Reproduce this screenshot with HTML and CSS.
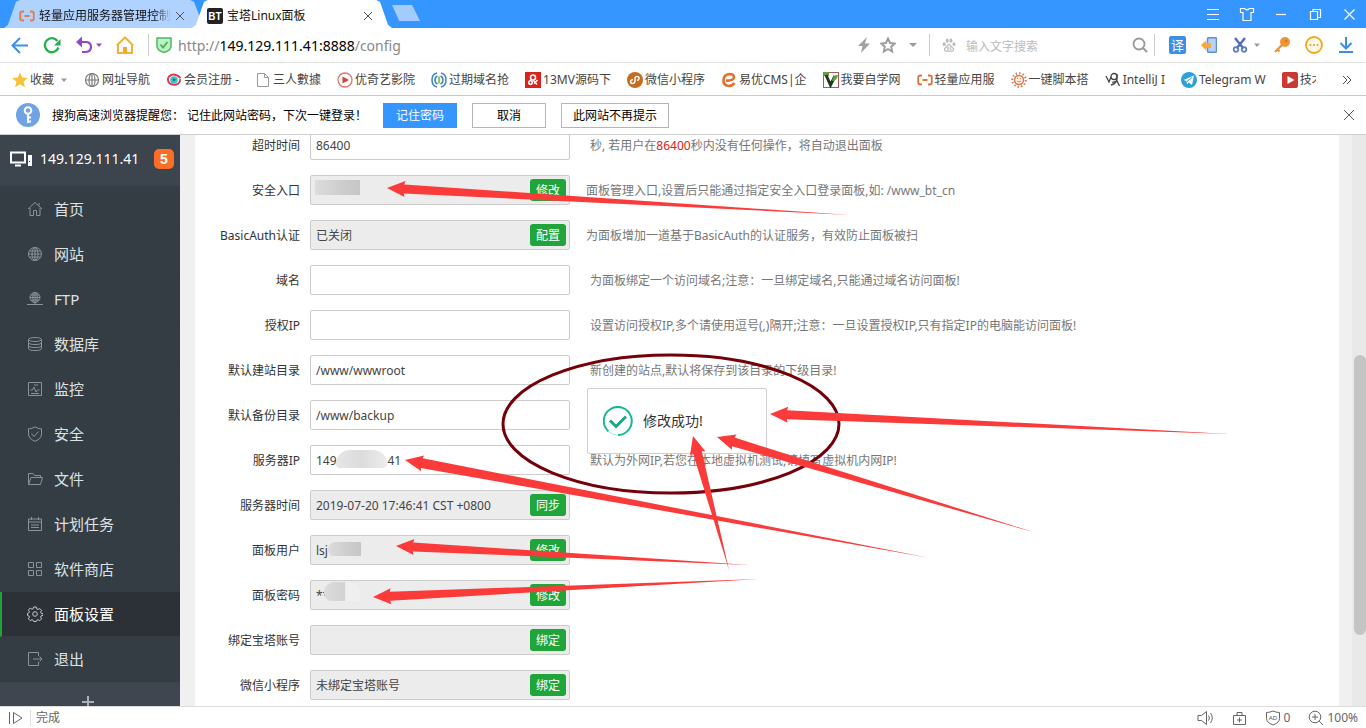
FILE: index.html
```html
<!DOCTYPE html>
<html lang="zh-CN">
<head>
<meta charset="utf-8">
<title>宝塔Linux面板</title>
<link rel="stylesheet" href="styles.css">
</head>
<body>
<header class="titlebar">
  <div class="tab tab-idle">
    <svg class="ic" viewBox="0 0 16 16"><path d="M5 3.500H3.500Q1.200 3.500 1.200 5.500v5q0 2 2.300 2H5M11 3.500h1.500q2.300 0 2.300 2v5q0 2-2.300 2H11M5.500 8h5" fill="none" stroke="#e57a45" stroke-width="1.800"/></svg>
    <span class="tab-title fade">轻量应用服务器管理控制</span>
    <button class="bare" aria-label="关闭标签"><svg class="x" viewBox="0 0 10 10"><path d="M1 1l8 8M9 1L1 9"/></svg></button>
  </div>
  <div class="tab tab-active">
    <svg class="ic" viewBox="0 0 16 16"><rect width="16" height="16" rx="2" fill="#222"/><text x="8" y="12" text-anchor="middle" class="bt">BT</text></svg>
    <span class="tab-title">宝塔Linux面板</span>
    <button class="bare" aria-label="关闭标签"><svg class="x" viewBox="0 0 10 10"><path d="M1 1l8 8M9 1L1 9"/></svg></button>
  </div>
  <button class="newtab" aria-label="新标签"></button>
  <div class="win">
    <button class="bare" aria-label="菜单"><svg class="ic" viewBox="0 0 16 16"><path d="M2 3.500h12M2 8.500h12M2 13.500h12"/></svg></button>
    <button class="bare" aria-label="皮肤"><svg class="ic" viewBox="0 0 16 16"><path d="M1.500 2.500h4Q8 5 10.500 2.500h4v4H12v8H4v-8H1.500z"/></svg></button>
    <button class="bare" aria-label="最小化"><svg class="ic" viewBox="0 0 16 16"><path d="M3 8.500h10"/></svg></button>
    <button class="bare" aria-label="还原"><svg class="ic" viewBox="0 0 16 16"><path d="M3.500 5.500h7v8h-7zM6 5V3.500h7.500v8H11"/></svg></button>
    <button class="bare" aria-label="关闭"><svg class="ic" viewBox="0 0 16 16"><path d="M3.500 3.500l10 10M13.500 3.500l-10 10"/></svg></button>
  </div>
</header>

<nav class="toolbar">
  <div class="nav-left">
    <button class="bare" aria-label="后退"><svg class="ic18" viewBox="0 0 18 18"><path d="M17 9.500H2M9 2L1.500 9.500 9 17" fill="none" stroke="#3e8ff0" stroke-width="2"/></svg></button>
    <button class="bare" aria-label="刷新"><svg class="ic18" viewBox="0 0 18 18"><path d="M15.500 11.500A7 7 0 1 1 14.500 5" fill="none" stroke="#23b14d" stroke-width="2.300"/><path d="M17.500 3v6.500H11z" fill="#23b14d"/></svg></button>
    <button class="bare undo" aria-label="撤销"><svg class="ic18" viewBox="0 0 18 18"><path d="M3 6h8.500q4.500.5 4.500 5t-5 5H7" fill="none" stroke="#9146cc" stroke-width="2.200"/><path d="M1 6l6-5.500v11z" fill="#9146cc"/></svg><svg class="caret" viewBox="0 0 8 8"><path d="M1 2.500h6L4 6z" fill="#9146cc"/></svg></button>
    <button class="bare" aria-label="主页"><svg class="ic18" viewBox="0 0 18 18"><path d="M2 8.500v8.500h14V8.500M.8 9.500L9 1.500l8.200 8" fill="none" stroke="#f3b13c" stroke-width="2"/><rect x="7" y="11" width="4" height="6" fill="#f3a52c"/></svg></button>
    <i class="divider"></i>
    <svg class="ic" viewBox="0 0 16 16"><path d="M1 1h14v8q0 4.500-7 6.500Q1 13.500 1 9z" fill="#bdf0c6" stroke="#4cb963" stroke-width="1.500"/><path d="M4.500 7.500L7 10.500 11.500 5" fill="none" stroke="#43b25b" stroke-width="1.800"/></svg>
    <span class="url">http://<b>149.129.111.41:8888</b>/config</span>
  </div>
  <div class="nav-right">
    <svg class="ic" viewBox="0 0 16 16"><path d="M11 0L2 9h4.500L5 16l9-9.500H9z" fill="#a2a2a2"/></svg>
    <svg class="ic star" viewBox="0 0 16 16"><path d="M8 1.500l2 4.500 4.800.5-3.600 3.200 1 4.800L8 12l-4.200 2.500 1-4.800L1.200 6.500 6 6z" fill="none" stroke="#9c9c9c" stroke-width="1.900"/></svg>
    <svg class="caret wide" viewBox="0 0 8 8"><path d="M0 2h8L4 6z" fill="#999"/></svg>
    <i class="divider"></i>
    <svg class="ic paw" viewBox="0 0 16 16"><g fill="#bbb"><ellipse cx="2.500" cy="7" rx="1.700" ry="2.200"/><ellipse cx="6" cy="3" rx="1.700" ry="2.300"/><ellipse cx="10.200" cy="3" rx="1.700" ry="2.300"/><ellipse cx="13.700" cy="7" rx="1.700" ry="2.200"/></g><path d="M8 7l5 5q1 3-2 3H5q-3 0-2-3z" fill="none" stroke="#bbb" stroke-width="1.400"/><path d="M6 10v3h1.500v-3M9.500 9.500V13H11" fill="none" stroke="#bbb"/></svg>
    <input class="search" type="text" placeholder="输入文字搜索" aria-label="搜索">
    <svg class="ic" viewBox="0 0 16 16"><circle cx="7" cy="7" r="5.500" fill="none" stroke="#999" stroke-width="1.800"/><path d="M11 11l4 4" stroke="#999" stroke-width="2"/></svg>
    <i class="divider"></i>
    <div class="tools">
      <span class="trans">译</span>
      <svg class="ic" viewBox="0 0 16 16"><rect x="6.500" y=".8" width="9" height="14.400" rx="1" fill="#b8d2f5" stroke="#5b8fd8" stroke-width="1.500"/><path d="M0 8l5-4.500V6h5v5H5v2.500z" fill="#f5a93a"/></svg>
      <span class="pair"><svg class="ic" viewBox="0 0 16 16"><path d="M3 1l8.500 10.500M13 1L4.500 11.500" stroke="#5569bd" stroke-width="2.400"/><circle cx="4" cy="12.500" r="2.300" fill="none" stroke="#5b7cc9" stroke-width="1.700"/><circle cx="12" cy="12.500" r="2.300" fill="none" stroke="#5b7cc9" stroke-width="1.700"/></svg><svg class="caret" viewBox="0 0 8 8"><path d="M1 2.500h6L4 6z" fill="#999"/></svg></span>
      <svg class="ic" viewBox="0 0 16 16"><circle cx="11" cy="5" r="5" fill="#ef9634"/><path d="M9 7l-8 8M3 12l2.500 2.500" stroke="#ef9634" stroke-width="2.400"/><circle cx="12" cy="4" r="1.500" fill="#d27d1e"/></svg>
      <svg class="ic18" viewBox="0 0 18 18"><circle cx="9" cy="9" r="8" fill="#fff8e6" stroke="#f0a91f" stroke-width="1.800"/><g fill="#d99d30"><circle cx="5.500" cy="9" r="1"/><circle cx="9" cy="9" r="1"/><circle cx="12.500" cy="9" r="1"/></g></svg>
      <svg class="ic" viewBox="0 0 16 16"><path d="M8 0v11M2.500 6L8 11.500 13.500 6M1 15h14" fill="none" stroke="#3b8de8" stroke-width="2"/></svg>
    </div>
  </div>
</nav>

<nav class="bookmarks">
  <a href="#" class="fav"><svg class="ic" viewBox="0 0 16 16"><path d="M8 .5l2.300 5 5.500.5-4.200 3.700 1.300 5.500L8 12.300l-4.900 2.900 1.300-5.500L.2 6l5.500-.5z" fill="#f8c13c"/></svg>收藏<svg class="caret" viewBox="0 0 8 8"><path d="M1 2.500h6L4 6z" fill="#999"/></svg></a>
  <a href="#"><svg class="ic" viewBox="0 0 16 16"><g fill="none" stroke="#777" stroke-width="1.200"><circle cx="8" cy="8" r="6.500"/><ellipse cx="8" cy="8" rx="3" ry="6.500"/><path d="M1.500 8h13M8 1.500v13"/></g></svg>网址导航</a>
  <a href="#"><svg class="ic" viewBox="0 0 16 16"><circle cx="8" cy="8" r="3.800" fill="#38c5c3"/><circle cx="8" cy="7.800" r="1.300" fill="#1d6f80"/><path d="M14.500 6Q8 0 3 4.500.5 8 3.500 11" fill="none" stroke="#e8344c" stroke-width="1.900"/><path d="M3 11q5 3.500 9.500.5 2-2 1.500-4.500" fill="none" stroke="#d4304f" stroke-width="1.700"/></svg>会员注册 -</a>
  <a href="#"><svg class="ic" viewBox="0 0 16 16"><path d="M2.500 1.500h7l4 4v9h-11zM9.500 1.500v4h4" fill="#fff" stroke="#999"/></svg>三人數據</a>
  <a href="#"><svg class="ic" viewBox="0 0 16 16"><circle cx="8" cy="8" r="7" fill="#fff" stroke="#d9776b" stroke-width="1.300"/><path d="M5.500 4.500L12 8l-6.500 3.500z" fill="#d54235"/></svg>优奇艺影院</a>
  <a href="#"><svg class="ic" viewBox="0 0 16 16"><g fill="none" stroke="#3c84c6" stroke-width="1.500"><path d="M6 1Q1 2 1 8t5 7M10 1q5 1 5 7t-5 7M6.500 4Q4 5 4 8t2.500 4M9.500 4Q12 5 12 8t-2.500 4"/></g><path d="M8 4.500v7" stroke="#96c94d" stroke-width="2"/></svg>过期域名抢</a>
  <a href="#"><svg class="ic" viewBox="0 0 16 16"><rect width="16" height="16" fill="#d8231f"/><g fill="none" stroke="#fff" stroke-width="1.500"><circle cx="8" cy="5.500" r="2.500"/><circle cx="5.500" cy="10.500" r="1.800"/><path d="M8 8l4 4.500M9 11.500l3.500-3.500"/></g></svg>13MV源码下</a>
  <a href="#"><svg class="ic" viewBox="0 0 16 16"><circle cx="8" cy="8" r="8" fill="#c56c21"/><path d="M6 7.500q-2.500.5-2.500 2.300 0 1.700 2 1.700T8 9.500v-3q0-2 2-2t2.200 1.700Q12.200 8 10 8.500" fill="none" stroke="#fff" stroke-width="1.400"/></svg>微信小程序</a>
  <a href="#"><svg class="ic" viewBox="0 0 16 16"><path d="M5 8.500q7 .5 8-3Q13 2 8.500 2 3 2.500 2.500 8t5 6q4 0 6-3" fill="none" stroke="#e5702c" stroke-width="2.700"/></svg>易优CMS|企</a>
  <a href="#"><svg class="ic" viewBox="0 0 16 16"><rect x=".5" y=".5" width="15" height="15" fill="#fff" stroke="#b05656"/><path d="M0 0h6v4H0z" fill="#57a541"/><path d="M3 3l4.500 10L12 4" fill="none" stroke="#26361d" stroke-width="3"/><path d="M9 9q1-7 6-6-1 6-6 6" fill="#57a541"/></svg>我要自学网</a>
  <a href="#"><svg class="ic" viewBox="0 0 16 16"><path d="M5 3.500H3.500Q1.200 3.500 1.200 5.500v5q0 2 2.300 2H5M11 3.500h1.500q2.300 0 2.300 2v5q0 2-2.300 2H11M5.500 8h5" fill="none" stroke="#e2703a" stroke-width="1.800"/></svg>轻量应用服</a>
  <a href="#"><svg class="ic" viewBox="0 0 16 16"><circle cx="8" cy="8" r="4.500" fill="#fff7ef" stroke="#d9774b" stroke-width="1.500"/><circle cx="8" cy="8" r="6.800" fill="none" stroke="#d9774b" stroke-width="2" stroke-dasharray="1.500 2.050"/><path d="M6 9q2 2 4 0M6 6.500h1M9 6.500h1" fill="none" stroke="#d9774b"/></svg>一键脚本搭</a>
  <a href="#"><svg class="ic" viewBox="0 0 16 16"><g fill="none" stroke="#444" stroke-width="1.300"><path d="M1 4l3 6 2-5"/><circle cx="9" cy="4.500" r="3"/><path d="M12 2v5q-1 5-6 6M7 10.500l5-1.500 2.500 5"/></g></svg>IntelliJ I</a>
  <a href="#"><svg class="ic" viewBox="0 0 16 16"><circle cx="8" cy="8" r="8" fill="#2ca1d6"/><path d="M2.500 8L13 3.500 11 13 7.500 10.500 6 12.500 5.500 9z" fill="#fff"/><path d="M6 9.500l5-4" stroke="#2ca1d6"/></svg>Telegram W</a>
  <a href="#" class="cut"><svg class="ic" viewBox="0 0 16 16"><rect width="16" height="16" rx="2" fill="#c93a33"/><path d="M5.500 4l7 4-7 4z" fill="#fff"/></svg>技术</a>
  <button class="bare more" aria-label="更多书签"><svg class="x" viewBox="0 0 10 10"><path d="M1 1l4 4-4 4M5 1l4 4-4 4"/></svg></button>
</nav>

<section class="infobar">
  <svg class="key" viewBox="0 0 24 24"><circle cx="12" cy="12" r="12" fill="#6fa3e3"/><circle cx="12" cy="7.500" r="3.300" fill="none" stroke="#fff" stroke-width="2"/><path d="M12 11v9M12 14.500h3M12 18.500h3" stroke="#fff" stroke-width="2"/></svg>
  <p>搜狗高速浏览器提醒您： 记住此网站密码，下次一键登录！</p>
  <button class="ib primary">记住密码</button>
  <button class="ib">取消</button>
  <button class="ib long">此网站不再提示</button>
  <button class="bare close" aria-label="关闭提示"><svg class="x" viewBox="0 0 10 10"><path d="M0 0l10 10M10 0L0 10"/></svg></button>
</section>

<main class="view">
  <aside class="side">
    <div class="host">
      <svg class="pc" viewBox="0 0 22 16"><path d="M1 1.500h14v10H1z" fill="none" stroke="#fff" stroke-width="2"/><path d="M5 14.500h6" stroke="#fff" stroke-width="2"/><rect x="18" y="4" width="4" height="11" fill="#fff"/><path d="M19 10.500h1" stroke="#3c444d"/></svg>
      <span>149.129.111.41</span><em>5</em>
    </div>
    <nav class="menu">
      <a href="#"><svg class="ic" viewBox="0 0 16 16"><path d="M1 8l7-6.500L15 8M3 7v7.500h3.500v-5h3v5H13V7M12 2v2.500"/></svg>首页</a>
      <a href="#"><svg class="ic" viewBox="0 0 16 16"><circle cx="8" cy="8" r="6.500"/><ellipse cx="8" cy="8" rx="3" ry="6.500"/><path d="M1.500 8h13M8 1.500v13M2.500 5h11M2.500 11h11"/></svg>网站</a>
      <a href="#"><svg class="ic" viewBox="0 0 16 16"><circle cx="8" cy="6.500" r="5"/><ellipse cx="8" cy="6.500" rx="2.200" ry="5"/><path d="M3 6.500h10M8 1.500V13M4 4h8M4 9h8M0 13.500h16"/></svg>FTP</a>
      <a href="#"><svg class="ic" viewBox="0 0 16 16"><ellipse cx="8" cy="3.500" rx="6.500" ry="2"/><path d="M1.500 3.500v9q0 2 6.500 2t6.500-2v-9M1.500 6.500q0 2 6.500 2t6.500-2M1.500 9.500q0 2 6.500 2t6.500-2"/></svg>数据库</a>
      <a href="#"><svg class="ic" viewBox="0 0 16 16"><path d="M1.500 1.500h13v13h-13zM3.500 9h2l1.500-3 2 5 1.500-2h2M4 12.500h8M7 4h4"/></svg>监控</a>
      <a href="#"><svg class="ic" viewBox="0 0 16 16"><path d="M8 .8q3 2 6.500 2v5q0 5-6.500 7.500Q1.500 12.800 1.500 7.800v-5q3.500 0 6.500-2M4.500 7.500l2.500 3 4.500-5"/></svg>安全</a>
      <a href="#"><svg class="ic" viewBox="0 0 16 16"><path d="M1.500 13.500v-11H6l1.500 2h6v2M1.500 13.500l2.500-7h11.500l-2 7z"/></svg>文件</a>
      <a href="#"><svg class="ic" viewBox="0 0 16 16"><path d="M1.500 3h13v11.500h-13zM1.500 6h13M4.500 1v3M11.500 1v3M4 9h8M4 11.500h8"/></svg>计划任务</a>
      <a href="#"><svg class="ic" viewBox="0 0 16 16"><path d="M1.500 1.500h5v5h-5zM9.500 1.500h5v5h-5zM1.500 9.500h5v5h-5zM9.500 9.500h5v5h-5z"/></svg>软件商店</a>
      <a href="#" class="on"><svg class="ic" viewBox="0 0 16 16"><circle cx="8" cy="8" r="2.300"/><path d="M6.700 1h2.600l.5 2 1.200.5 1.800-1 1.800 1.800-1 1.800.5 1.200 2 .5v1.600l-2 .5-.5 1.200 1 1.800-1.800 1.800-1.800-1-1.200.5-.5 1.300H6.700l-.5-1.300-1.200-.5-1.800 1-1.800-1.800 1-1.800-.5-1.200-1.400-.5V7.300l1.400-.5.500-1.200-1-1.800 1.800-1.600 1.800 1 1.200-.5z"/></svg>面板设置</a>
      <a href="#"><svg class="ic" viewBox="0 0 16 16"><path d="M11.500 5V1.500h-10v13h10V11M6 8h9M12.500 5.500L15 8l-2.500 2.500"/></svg>退出</a>
    </nav>
    <button class="bare plus" aria-label="添加"><svg class="ic" viewBox="0 0 16 16"><path d="M8 2v12M2 8h12"/></svg></button>
  </aside>
  <section class="panel">
    <form class="form">
      <div class="row"><label for="f1">超时时间</label><div class="box"><input id="f1" value="86400"></div><p>秒, 若用户在<strong>86400</strong>秒内没有任何操作，将自动退出面板</p></div>
      <div class="row near"><label for="f2">安全入口</label><div class="box off"><input id="f2" readonly><i class="mask m2"></i><button type="button">修改</button></div><p>面板管理入口,设置后只能通过指定安全入口登录面板,如: /www_bt_cn</p></div>
      <div class="row near"><label for="f3">BasicAuth认证</label><div class="box off"><input id="f3" value="已关闭" readonly><button type="button">配置</button></div><p>为面板增加一道基于BasicAuth的认证服务，有效防止面板被扫</p></div>
      <div class="row"><label for="f4">域名</label><div class="box"><input id="f4"></div><p>为面板绑定一个访问域名;注意：一旦绑定域名,只能通过域名访问面板!</p></div>
      <div class="row"><label for="f5">授权IP</label><div class="box"><input id="f5"></div><p>设置访问授权IP,多个请使用逗号(,)隔开;注意：一旦设置授权IP,只有指定IP的电脑能访问面板!</p></div>
      <div class="row"><label for="f6">默认建站目录</label><div class="box"><input id="f6" value="/www/wwwroot"></div><p>新创建的站点,默认将保存到该目录的下级目录!</p></div>
      <div class="row"><label for="f7">默认备份目录</label><div class="box"><input id="f7" value="/www/backup"></div></div>
      <div class="row"><label for="f8">服务器IP</label><div class="box"><input id="f8" value="149.129.111.41"><i class="mask m8"></i></div><p>默认为外网IP,若您在本地虚拟机测试,请填写虚拟机内网IP!</p></div>
      <div class="row"><label for="f9">服务器时间</label><div class="box off"><input id="f9" value="2019-07-20 17:46:41 CST +0800" readonly><button type="button">同步</button></div></div>
      <div class="row"><label for="f10">面板用户</label><div class="box off"><input id="f10" value="lsj" readonly><i class="mask m10"></i><button type="button">修改</button></div></div>
      <div class="row"><label for="f11">面板密码</label><div class="box off"><input id="f11" value="**" readonly><i class="mask m11"></i><button type="button">修改</button></div></div>
      <div class="row"><label for="f12">绑定宝塔账号</label><div class="box off"><input id="f12" readonly><button type="button">绑定</button></div></div>
      <div class="row"><label for="f13">微信小程序</label><div class="box off"><input id="f13" value="未绑定宝塔账号" readonly><button type="button">绑定</button></div></div>
    </form>
  </section>
  <div class="scroll"><i></i></div>
  <div class="toast" role="status"><svg viewBox="0 0 30 30"><path d="M5.500 25.500A14 14 0 1 1 15 29" fill="none" stroke="#14b795" stroke-width="2"/><path d="M5.500 25.500Q9 29 15 29" fill="none" stroke="#a9e5d9" stroke-width="1"/><path d="M7 14.500l6 6L23 10.500" fill="none" stroke="#14a88a" stroke-width="3"/></svg>修改成功!</div>
</main>

<footer class="status">
  <svg class="ic" viewBox="0 0 16 16"><path d="M1.500 2v12M5.500 2.500v11L14 8z"/></svg>
  <span class="done">完成</span>
  <div class="status-right">
    <svg class="ic" viewBox="0 0 16 16"><path d="M1 5.500h3.500l5-4v13l-5-4H1zM11.500 5.500q2 2.500 0 5M13.500 3q3.500 5 0 10"/></svg>
    <svg class="ic" viewBox="0 0 16 16"><path d="M2.500 5.500h12v9h-12zM6 5V2.500h5V5M8.500 7.500v5M6 10h5"/></svg>
    <span class="pair"><svg class="ic" viewBox="0 0 16 16"><path d="M8 1q3 1.500 6.500 1.500v6q0 4-6.500 6.500-6.500-2.500-6.500-6.500v-6Q5 2.500 8 1"/><text x="8" y="10" text-anchor="middle" class="ad">AD</text></svg>0</span>
    <span class="pair"><svg class="ic" viewBox="0 0 16 16"><circle cx="7" cy="7" r="5.800"/><path d="M11.200 11.200L15 15M4 7h6M7 4v6"/></svg>100%</span>
  </div>
</footer>

<svg class="marks" width="1366" height="728" viewBox="0 0 1366 728" aria-hidden="true">
  <ellipse cx="671" cy="424" rx="168" ry="69" fill="none" stroke="#74000a" stroke-width="3"/>
  <g fill="#fb3a3a">
    <path transform="translate(387 188) rotate(3.340)" d="M0 0L18-8 17-4.500 464 0 17 4.500 18 8z"/>
    <path transform="translate(770 414) rotate(2.490)" d="M0 0L18-8 17-4.500 460 0 17 4.500 18 8z"/>
    <path transform="translate(717 437) rotate(16.730)" d="M0 0L18-8 17-4.500 330 0 17 4.500 18 8z"/>
    <path transform="translate(693 436) rotate(74.960)" d="M0 0L18-8 17-4.500 139 0 17 4.500 18 8z"/>
    <path transform="translate(405 460) rotate(10.570)" d="M0 0L18-8 17-5 534 0 17 5 18 8z"/>
    <path transform="translate(396 546) rotate(3.070)" d="M0 0L18-8 17-4.500 354 0 17 4.500 18 8z"/>
    <path transform="translate(373 597) rotate(-2.660)" d="M0 0L18-8 17-4.500 387 0 17 4.500 18 8z"/>
  </g>
</svg>
</body>
</html>
```
FILE: styles.css
```css
* { box-sizing: border-box; }
body {
  margin: 0;
  height: 100vh;
  display: flex;
  flex-direction: column;
  position: relative;
  overflow: hidden;
  font: 12px/16px "Noto Sans", "Noto Sans CJK SC", sans-serif;
  color: #333;
  background: #fff;
}
button, input { font: inherit; color: inherit; }
p { margin: 0; }
a { color: inherit; text-decoration: none; }
svg { display: block; flex: none; }
.ic { width: 16px; height: 16px; }
.ic18 { width: 18px; height: 18px; }
.caret { width: 8px; height: 8px; }
.bare { border: 0; padding: 0; background: none; display: flex; align-items: center; }
.x { width: 10px; height: 10px; fill: none; stroke: #555; stroke-width: 1; overflow: visible; }
.pair { display: flex; align-items: center; }

/* title bar */
.titlebar { height: 28px; flex: none; display: flex; align-items: flex-start; background: #3596ff; padding-left: 4px; }
.tab { height: 28px; width: 200px; display: flex; align-items: center; padding: 3px 19px 0 15px; gap: 4px; color: #111; }
.tab-idle { background: #b0d2ff; clip-path: polygon(0 100%, 2% 88%, 6% 6%, 8% 0, 93% 0, 95% 6%, 100% 100%); }
.tab-active { background: #fff; margin-left: -12px; clip-path: polygon(0 100%, 2% 88%, 6% 6%, 8% 0, 92% 0, 94% 6%, 98% 88%, 100% 100%); }
.tab-title { flex: 1; white-space: nowrap; overflow: hidden; }
.fade { mask-image: linear-gradient(90deg, #000 88%, transparent); }
.bt { font: bold 10px "Liberation Sans", sans-serif; fill: #fff; }
.newtab { width: 28px; height: 16px; border: 0; padding: 0; margin-top: 5px; background: #a4cbfd; clip-path: polygon(0 0, 72% 0, 100% 100%, 26% 100%); }
.win { margin-left: auto; display: flex; gap: 18px; padding: 6px 9px 0 0; }
.win .ic { fill: none; stroke: #fff; stroke-width: 1.200; }

/* address bar */
.toolbar { height: 35px; flex: none; display: flex; align-items: center; justify-content: space-between; border-bottom: 1px solid #e2e2e2; }
.nav-left { display: flex; align-items: center; padding-left: 11px; gap: 14px; }
.nav-left .undo { gap: 2px; }
.nav-left .undo + .bare { margin-left: -1px; }
.divider { width: 1px; height: 22px; background: #ccc; }
.nav-left .divider + .ic { margin: 0 -8px 0 -7px; }
.url { font-size: 14px; line-height: 20px; padding-top: 2px; color: #888; }
.url b { font-weight: 400; color: #000; }
.nav-right { display: flex; align-items: center; padding-right: 12px; }
.star { margin: 0 13px 0 8px; }
.nav-right .divider { margin: 0 12px; }
.nav-right .ic + .divider { margin: 0 14px 0 6px; }
.paw { width: 14px; height: 14px; }
.search { width: 166px; height: 20px; border: 0; padding: 2px 0 0; margin: 0 0 0 10px; outline: 0; background: none; }
.search::placeholder { color: #bbb; opacity: 1; }
.tools { display: flex; align-items: center; gap: 15px; }
.tools .pair { gap: 5px; margin-right: -2px; }
.trans { width: 17px; height: 18px; border-radius: 2px; background: #3c8fe9; color: #fff; font-size: 13px; line-height: 18px; text-align: center; }

/* bookmarks */
.bookmarks { height: 33px; flex: none; display: flex; align-items: center; gap: 16px; padding: 2px 0 0 12px; border-bottom: 1px solid #c9c9c9; overflow: hidden; }
.bookmarks a { display: flex; align-items: center; gap: 2px; white-space: nowrap; color: #444; }
.bookmarks .fav .caret { margin-left: 4px; }
.bookmarks .cut { width: 34px; overflow: hidden; }
.more { margin: 0 14px 0 auto; }

/* password prompt */
.infobar { height: 39px; flex: none; display: flex; align-items: center; padding: 0 12px 0 16px; color: #000; border-bottom: 1px solid #d0d0d0; }
.key { width: 24px; height: 24px; margin-right: 12px; }
.infobar p { margin-right: 16px; padding-top: 2px; }
.ib { width: 74px; height: 25px; padding: 1px 0 0; margin-right: 15px; background: #fff; border: 1px solid #b5b5b5; }
.ib.primary { background: #3596ff; border-color: #3596ff; color: #fff; }
.ib.long { width: 108px; }
.close { margin-left: auto; }

/* page */
.view { flex: 1; min-height: 0; display: flex; position: relative; overflow: hidden; background: #f0f0f1; }
.side { width: 180px; flex: none; display: flex; flex-direction: column; background: #3f464f; }
.host { flex: none; height: 51px; display: flex; align-items: center; padding: 0 6px 4px 10px; color: #fff; font-size: 14px; background: #3c444d; }
.pc { width: 22px; height: 16px; margin-right: 8px; }
.host em { margin-left: auto; width: 20px; height: 20px; border-radius: 5px; background: #fc6d26; font: bold 14px/20px "Liberation Sans", sans-serif; text-align: center; }
.menu { flex: none; background: #353d44; padding-top: 1px; }
.menu a { height: 45px; display: flex; align-items: center; gap: 11px; padding-left: 27px; font-size: 15px; color: #dfe2e5; border-bottom: 1px solid #333a41; }
.menu .ic, .plus .ic { fill: none; stroke: #8b9299; stroke-width: 1; }
.menu .on { background: #2c3138; color: #fff; border-left: 2px solid #20a53a; padding-left: 25px; }
.menu .on .ic { stroke: #c5c8cb; }
.plus { justify-content: center; flex: none; margin: 12px 4px 0 0; }
.plus .ic { stroke: #aab0b5; stroke-width: 2; }
.panel { flex: 1; min-width: 0; margin: 0 13px 0 15px; background: #fff; overflow: hidden; }
.form { display: grid; gap: 15px; margin-top: -5px; }
.row { display: flex; align-items: center; height: 30px; }
.row label { width: 105px; margin-right: 10px; padding-top: 2px; text-align: right; }
.box { position: relative; width: 260px; height: 30px; flex: none; display: flex; align-items: center; padding: 0 3px 0 5px; border: 1px solid #ccc; border-radius: 2px; background: #fff; color: #444; }
.box.off { background: #ececec; }
.box input { flex: 1; min-width: 0; height: 26px; padding: 0; border: 0; background: none; outline: 0; }
.box button { width: 36px; height: 22px; padding: 2px 0 0; border: 0; border-radius: 3px; background: #20a53a; color: #fff; }
.row p { margin-left: 20px; padding-top: 2px; color: #777; white-space: nowrap; }
.row.near p { margin-left: 16px; }
.row strong { font-weight: 400; color: #e02020; }
.mask { position: absolute; background: linear-gradient(90deg, #dcdcdc, #cdcdcd 60%, #c6c6c6); }
.m2 { left: 4px; top: 4px; width: 45px; height: 15px; }
.m8 { left: 25px; top: 4px; width: 51px; height: 18px; border-radius: 14px 14px 4px 4px; background: linear-gradient(90deg, #e6e6e6, #dcdcdc 50%, #ececec); }
.m10 { left: 17px; top: 6px; width: 33px; height: 14px; border-radius: 8px 0 0 6px; }
.m11 { left: 13px; top: 1px; width: 36px; height: 19px; border-radius: 10px 10px 0 8px; background: linear-gradient(90deg, #dcdcdc, #d2d2d2 58%, #efefef 60%); }
.scroll { width: 14px; flex: none; background: #e9e9e9; padding: 220px 0 0 2px; }
.scroll i { display: block; height: 280px; border-radius: 6px; background: #c4c4c4; }
.toast { position: absolute; left: 587px; top: 253px; width: 180px; height: 66px; display: flex; align-items: center; gap: 10px; padding-left: 15px; border: 1px solid #d0d0d0; border-radius: 2px; background: #fff; color: #333; font-size: 14px; }
.toast svg { width: 30px; height: 30px; }

/* status bar */
.status { height: 22px; flex: none; display: flex; align-items: center; padding: 0 8px; border-top: 1px solid #ddd; color: #666; }
.status .ic { fill: none; stroke: #666; stroke-width: 1; }
.done { margin-left: 6px; padding-left: 5px; border-left: 1px solid #ddd; }
.status-right { margin-left: auto; display: flex; align-items: center; gap: 18px; }
.status-right .pair { gap: 3px; }
.status .ad { font: 6px "Liberation Sans", sans-serif; fill: #555; stroke: none; }
.marks { position: absolute; left: 0; top: 0; pointer-events: none; }
```
